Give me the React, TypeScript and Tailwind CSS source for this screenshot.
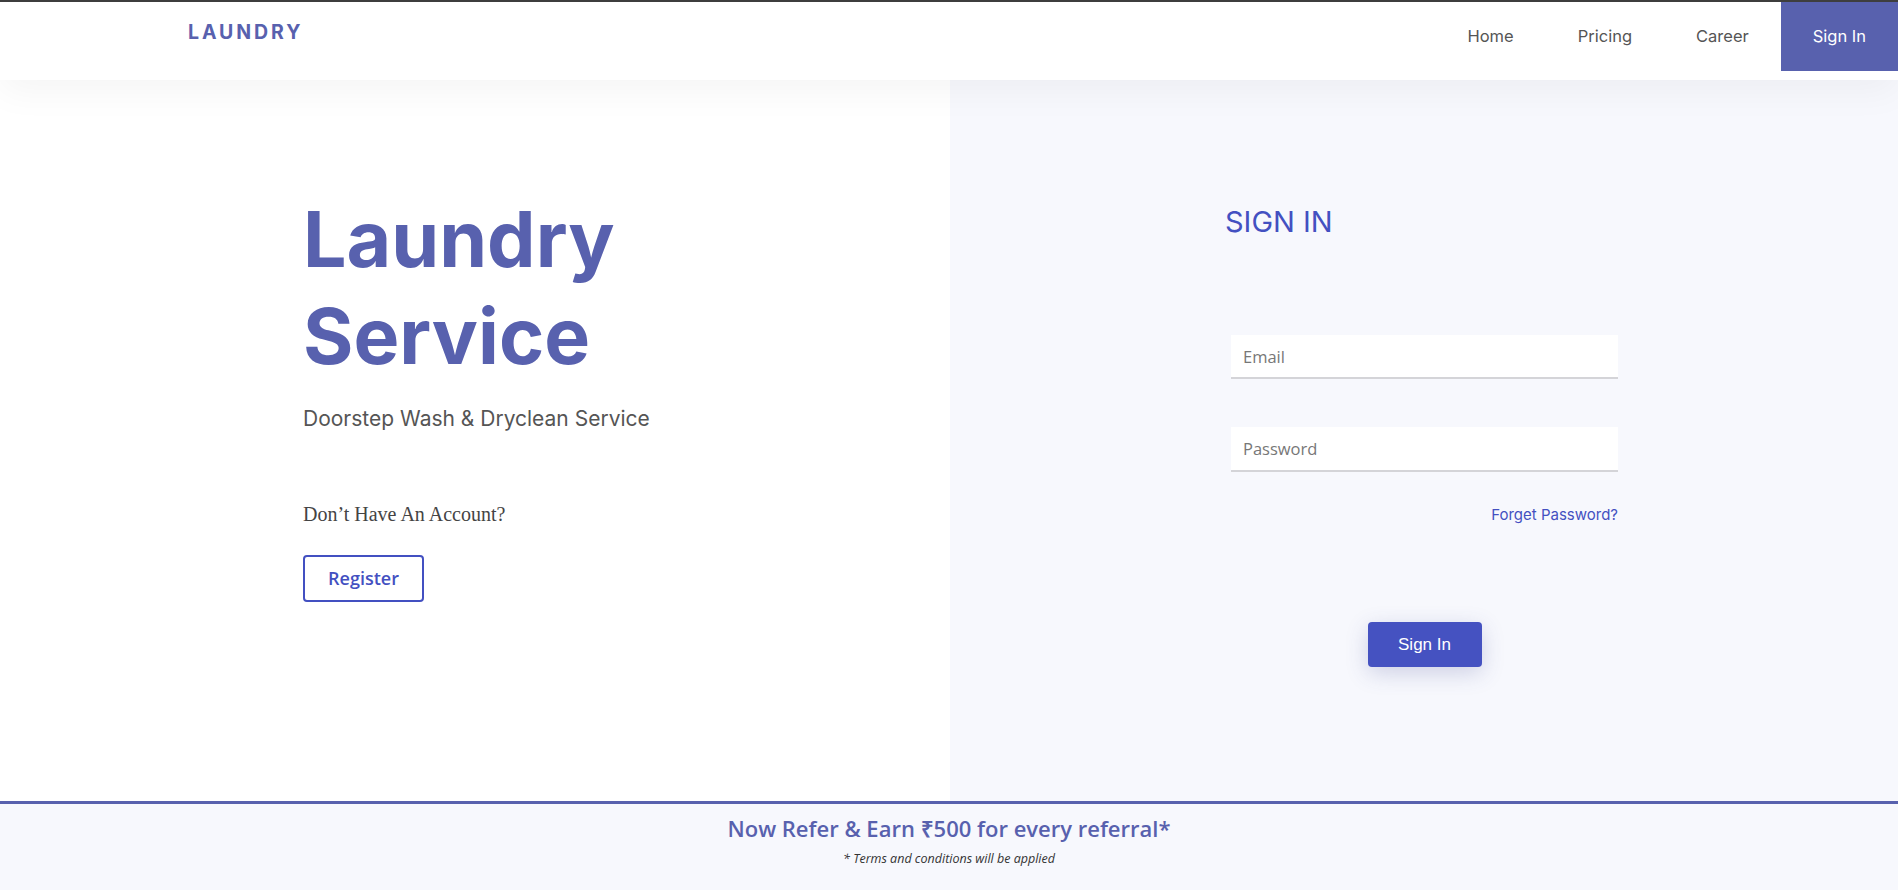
import React from "react";

const NAV = ["Home", "Pricing", "Career"];

export default function App() {
    return (
        <div className="w-full h-[890px] overflow-hidden bg-white flex flex-col font-['Inter',sans-serif]">
            <div className="h-[2px] bg-[#3f3f3f] shrink-0"></div>

            <header className="relative z-10 h-[78px] shrink-0 bg-white flex items-start justify-between shadow-[0_12px_36px_rgba(0,0,0,0.045)]">
                <div className="pl-[188px] h-[62px] flex items-center">
                    <span className="text-[19.5px] font-bold tracking-[0.15em] text-[#5861ae]">LAUNDRY</span>
                </div>
                <nav className="flex h-[69px]">
                    {NAV.map((item) => (
                        <a key={item} className="px-8 flex items-center text-[16.5px] text-[#555]">
                            {item}
                        </a>
                    ))}
                    <a className="px-8 flex items-center text-[16.5px] text-white bg-[#5861ae]">Sign In</a>
                </nav>
            </header>

            <main className="flex h-[721px] shrink-0">
                <section className="w-[950px] shrink-0 bg-white pl-[303px] pt-[111px]">
                    <h1 className="text-[77px] leading-[97px] font-bold text-[#5861ae]">
                        Laundry
                        <br />
                        Service
                    </h1>
                    <p className="mt-[20px] text-[21px] leading-7 text-[#555]">Doorstep Wash &amp; Dryclean Service</p>
                    <p className="mt-[69px] text-[20px] leading-[24px] text-[#444] font-['Liberation_Serif',serif]">
                        Don’t Have An Account?
                    </p>
                    <button className="mt-[29px] w-[121px] h-[47px] rounded-[4px] border-2 border-[#4350c1] text-[#4350c1] text-[18px] font-semibold font-['Open_Sans',sans-serif]">
                        Register
                    </button>
                </section>

                <section className="flex-1 bg-[#f7f8fd] pl-[275px] pt-[125px]">
                    <h2 className="text-[29px] leading-[34px] text-[#4350c1]">SIGN IN</h2>
                    <div className="ml-[6px] w-[387px] mt-[96px] flex flex-col">
                        <input
                            type="email"
                            placeholder="Email"
                            className="h-[44px] bg-white border-b-2 border-[#d4d4d8] px-3 text-[16.5px] outline-none placeholder:text-[#777] font-['Open_Sans',sans-serif]"
                        />
                        <input
                            type="password"
                            placeholder="Password"
                            className="mt-[48px] h-[45px] bg-white border-b-2 border-[#d4d4d8] px-3 text-[16.5px] outline-none placeholder:text-[#777] font-['Open_Sans',sans-serif]"
                        />
                        <a className="mt-[33px] self-end text-[15px] leading-5 text-[#4350c1]">Forget Password?</a>
                        <button className="mt-[97px] self-center w-[114px] h-[45px] rounded-[4px] bg-[#4552c1] text-white text-[17px] font-['Liberation_Sans',sans-serif] shadow-[0_6px_22px_rgba(60,70,140,0.22)]">
                            Sign In
                        </button>
                    </div>
                </section>
            </main>

            <footer className="flex-1 bg-[#f7f8fd] border-t-[3px] border-[#5861ae] flex flex-col items-center pt-[10px] font-['Open_Sans',sans-serif]">
                <p className="text-[22px] leading-7 font-semibold text-[#5861ae]">Now Refer &amp; Earn ₹500 for every referral*</p>
                <p className="mt-[9px] text-[12.5px] leading-4 italic text-[#333]">* Terms and conditions will be applied</p>
            </footer>
        </div>
    );
}
